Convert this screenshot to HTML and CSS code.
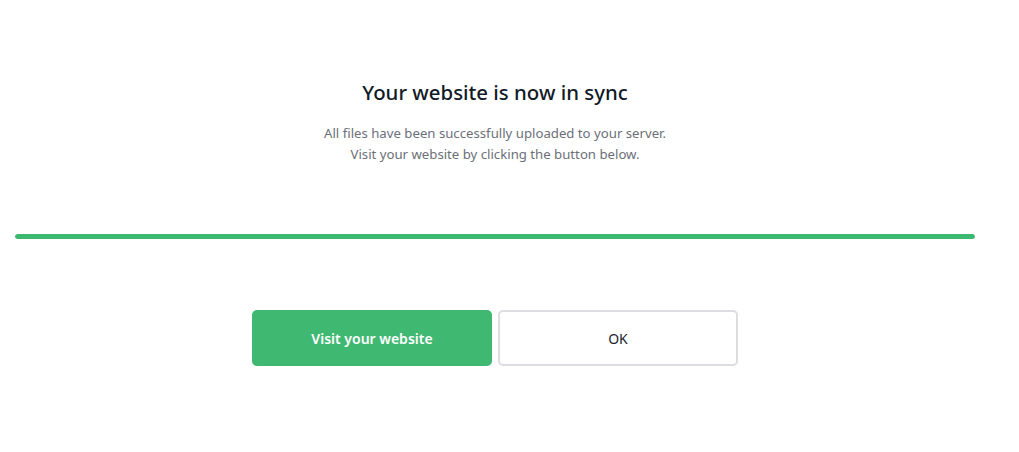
FILE: index.html
```html
<!DOCTYPE html>
<html>
<head>
<meta charset="utf-8">
<link rel="stylesheet" href="styles.css">
</head>
<body>
<div class="page">
  <h1 class="title">Your website is now in sync</h1>
  <p class="subtitle">All files have been successfully uploaded to your server.<br>Visit your website by clicking the button below.</p>
  <div class="progress"><div class="progress-fill"></div></div>
  <div class="actions">
    <button class="btn btn-primary">Visit your website</button>
    <button class="btn btn-secondary">OK</button>
  </div>
</div>
</body>
</html>
```
FILE: styles.css
```css
html, body {
  margin: 0;
  padding: 0;
  background: #ffffff;
}
body {
  font-family: "Noto Sans", "Open Sans", sans-serif;
  color: #1b2430;
}
.page {
  width: 960px;
  margin-left: 15px;
  padding-top: 76px;
  display: flex;
  flex-direction: column;
  align-items: center;
}
.title {
  margin: 0;
  font-size: 20.4px;
  font-weight: 500;
  line-height: 32px;
  color: #111a26;
}
.subtitle {
  margin: 15px 0 0;
  font-size: 13.2px;
  line-height: 21px;
  color: #6b6f78;
  text-align: center;
}
.progress {
  align-self: stretch;
  margin-top: 69px;
  height: 5px;
  border-radius: 3px;
  background: #e5e5e5;
  overflow: hidden;
}
.progress-fill {
  width: 100%;
  height: 100%;
  background: #3db870;
  border-radius: 3px;
}
.actions {
  display: flex;
  gap: 6px;
  margin-top: 71px;
}
.btn {
  width: 240px;
  height: 56px;
  border-radius: 5px;
  font-family: inherit;
  font-size: 14px;
  cursor: pointer;
}
.btn-primary {
  background: #3fb872;
  border: none;
  color: #ffffff;
  font-weight: 600;
}
.btn-secondary {
  background: #ffffff;
  border: 2px solid #dcdde2;
  color: #1b2430;
}
```
